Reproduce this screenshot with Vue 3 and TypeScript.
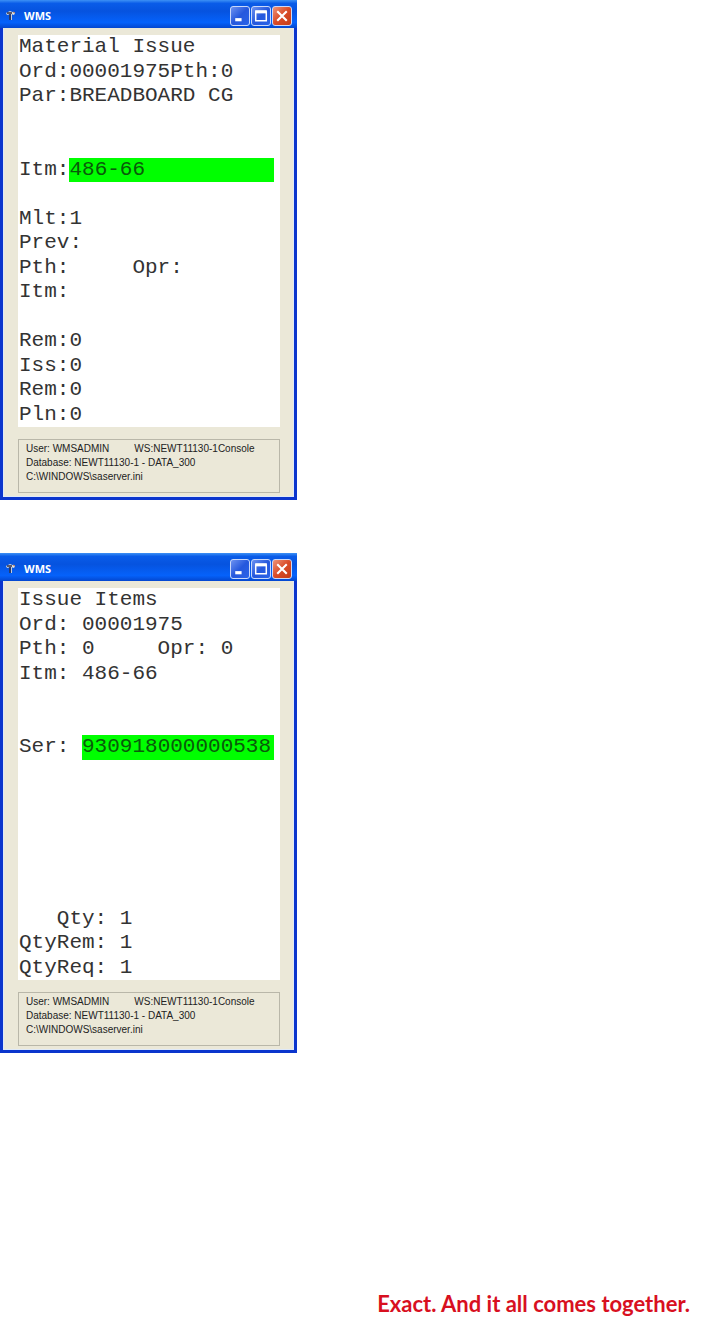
<script setup lang="ts">
import { ref } from 'vue'

interface Line {
  text: string
  field?: string
}

interface Terminal {
  id: string
  lines: Line[]
}

const values = ref<Record<string, string>>({
  Itm: '486-66',
  Ser: '930918000000538',
})

const terminals: Terminal[] = [
  {
    id: 'material-issue',
    lines: [
      { text: 'Material Issue' },
      { text: 'Ord:00001975Pth:0' },
      { text: 'Par:BREADBOARD CG' },
      { text: '' },
      { text: '' },
      { text: 'Itm:', field: 'Itm' },
      { text: '' },
      { text: 'Mlt:1' },
      { text: 'Prev:' },
      { text: 'Pth:     Opr:' },
      { text: 'Itm:' },
      { text: '' },
      { text: 'Rem:0' },
      { text: 'Iss:0' },
      { text: 'Rem:0' },
      { text: 'Pln:0' },
    ],
  },
  {
    id: 'issue-items',
    lines: [
      { text: 'Issue Items' },
      { text: 'Ord: 00001975' },
      { text: 'Pth: 0     Opr: 0' },
      { text: 'Itm: 486-66' },
      { text: '' },
      { text: '' },
      { text: 'Ser: ', field: 'Ser' },
      { text: '' },
      { text: '' },
      { text: '' },
      { text: '' },
      { text: '' },
      { text: '' },
      { text: '   Qty: 1' },
      { text: 'QtyRem: 1' },
      { text: 'QtyReq: 1' },
    ],
  },
]
</script>

<template>
  <main class="page">
    <section v-for="t in terminals" :key="t.id" class="window">
      <header class="titlebar">
        <svg class="app-icon" viewBox="0 0 12 12" aria-hidden="true">
          <path d="M1 3 5 1l5 2-1 2-3-1-4 1z" fill="#d9dde2" />
          <path d="M2 3h5M5 4v6" stroke="#302f45" stroke-width="1.5" />
          <path d="M6.5 4v6" stroke="#c3cbd8" />
          <path d="M8 2l2 1" stroke="#d58a54" />
        </svg>
        <h2 class="title">WMS</h2>
        <div class="controls">
          <button type="button" class="control" aria-label="Minimize">
            <svg viewBox="0 0 17 17"><path d="M4 12h6" stroke="#fff" stroke-width="3" /></svg>
          </button>
          <button type="button" class="control" aria-label="Maximize">
            <svg viewBox="0 0 17 17"><path d="M3.5 4v9h10V4" fill="none" stroke="#fff" stroke-width="1.4" /><path d="M3 4.5h11" stroke="#fff" stroke-width="3" /></svg>
          </button>
          <button type="button" class="control close" aria-label="Close">
            <svg viewBox="0 0 17 17"><path d="m4 4 9 9M13 4l-9 9" stroke="#fff" stroke-width="2" /></svg>
          </button>
        </div>
      </header>
      <div class="body">
        <div class="screen">
          <div v-for="(line, i) in t.lines" :key="i" class="line">
            <template v-if="line.field">
              <label class="text" :for="t.id + '-field'">{{ line.text }}</label>
              <input :id="t.id + '-field'" v-model="values[line.field]" class="entry" type="text" />
            </template>
            <span v-else class="text">{{ line.text }}</span>
          </div>
        </div>
        <footer class="status">
          <div class="session"><span>User: WMSADMIN</span><span>WS:NEWT11130-1Console</span></div>
          <div>Database: NEWT11130-1 - DATA_300</div>
          <div>C:\WINDOWS\saserver.ini</div>
        </footer>
      </div>
    </section>
    <p class="slogan">Exact. And it all comes together.</p>
  </main>
</template>

<style>
body {
  background: #fff;
}
</style>

<style scoped>
.page {
  display: flex;
  flex-direction: column;
  gap: 53px;
}

.window {
  box-sizing: border-box;
  width: 297px;
  max-width: 100%;
  padding: 0 3px 3px;
  background: #0b35cd;
}

.titlebar {
  display: flex;
  align-items: center;
  height: 28px;
  margin: 0 -3px;
  padding: 3px 5px 0;
  box-sizing: border-box;
  background: linear-gradient(#3d91f5 0, #0a5ce8 12%, #0653df 40%, #0562fb 80%, #0447cf 100%);
}

.app-icon {
  width: 12px;
  height: 12px;
}

.title {
  flex: 1;
  margin: 0 0 0 7px;
  color: #fff;
  font: bold 11px/16px "Open Sans", "Noto Sans", sans-serif;
}

.controls {
  display: flex;
  gap: 1px;
}

.control {
  display: block;
  box-sizing: border-box;
  width: 20px;
  height: 20px;
  padding: 0;
  border: 1px solid #c9d8fa;
  border-radius: 3px;
  background: linear-gradient(135deg, #6d92f0, #2558dd 50%, #2a63e8);
}

.control svg {
  display: block;
  width: 100%;
  height: 100%;
}

.close {
  background: linear-gradient(135deg, #ee9579, #d94b27 50%, #c43d18);
}

.body {
  padding: 7px 13px 3px 14px;
  border: solid #dfe9f8;
  border-width: 0 1px 1px;
  background: #ebe8d8;
}

.screen {
  display: grid;
  grid-auto-rows: 1fr;
  min-height: 392px;
  background: #fff;
  color: #333;
  font: 21px/24px "Liberation Mono", monospace;
}

.line {
  display: flex;
  min-width: 0;
  padding: 0 6px 0 1px;
}

.text {
  white-space: pre;
}

.entry {
  flex: 1;
  min-width: 0;
  padding: 0;
  border: 0;
  border-radius: 0;
  outline: 0;
  background: #0f0;
  color: #0a5a0a;
  font: inherit;
}

.status {
  box-sizing: border-box;
  min-height: 54px;
  margin-top: 12px;
  padding: 2px 7px;
  border: 1px solid #b9b7a9;
  color: #222;
  font: 10px/14px "Liberation Sans", Arial, sans-serif;
  white-space: nowrap;
}

.session {
  display: flex;
  gap: 25px;
}

.slogan {
  margin: 184px 12px 0 0;
  color: #d8101f;
  font: bold 22px/28px Lato, sans-serif;
  text-align: right;
}
</style>
